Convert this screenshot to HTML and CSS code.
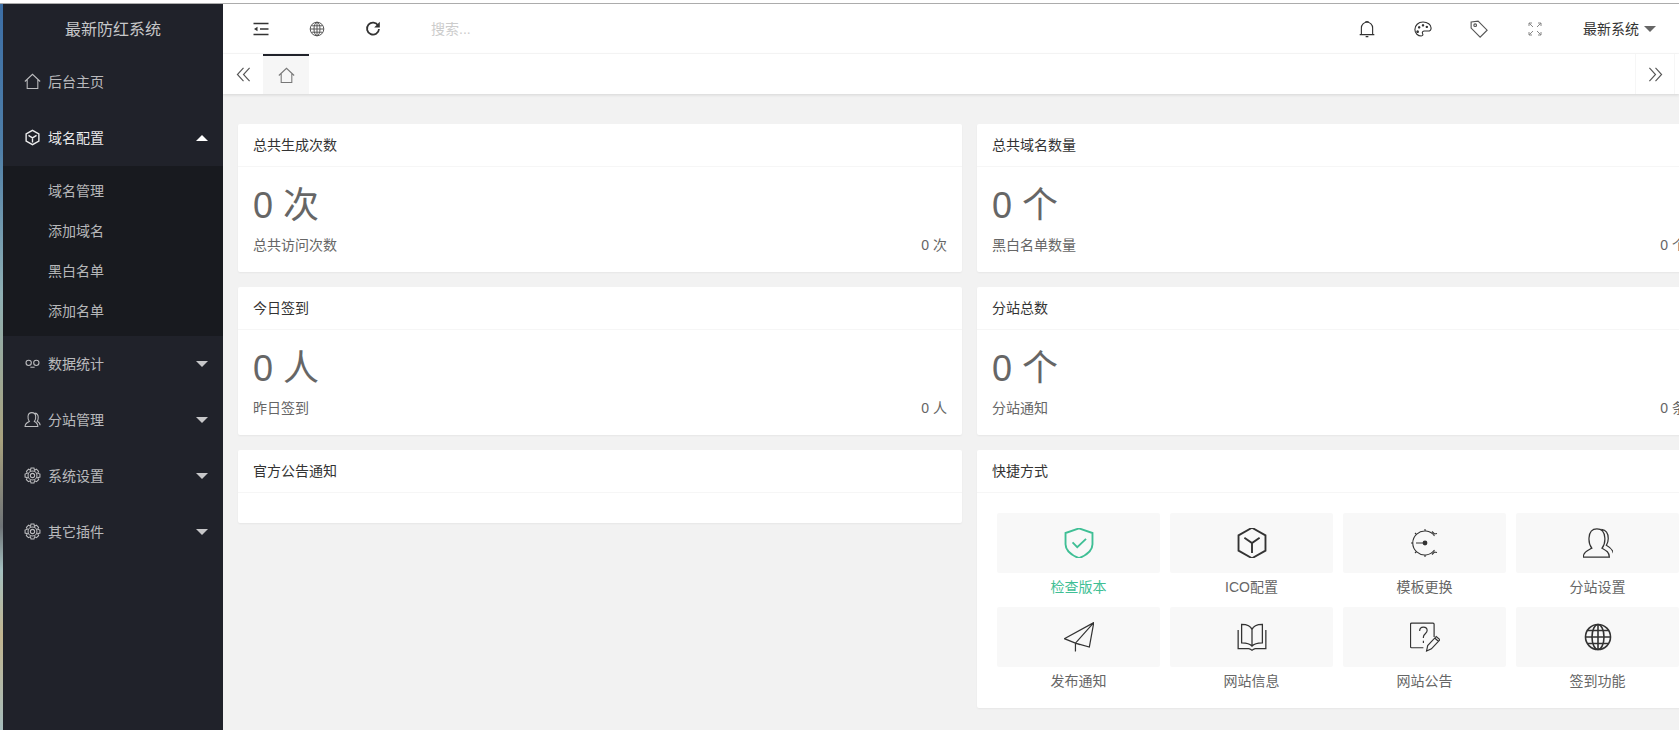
FILE: index.html
```html
<!DOCTYPE html>
<html lang="zh-CN">
<head>
    <meta charset="UTF-8">
    <meta name="viewport" content="width=device-width, initial-scale=1.0">
    <title>最新防红系统</title>
    <link rel="stylesheet" href="styles.css">
</head>
<body>
    <div class="window-edge"></div>
    <div class="app">
        <div class="desktop-strip"></div>
        <aside class="sidebar">
            <div class="logo">最新防红系统</div>
            <ul class="menu">
                <li class="menu-item">
                    <svg class="menu-icon" viewBox="0 0 16 16"><path d="M.8 8 8 1.2 15.2 8M3 6.2V14.5H13V6.2"/></svg>
                    <span>后台主页</span>
                </li>
                <li class="menu-item open">
                    <svg class="menu-icon bold" viewBox="0 0 16 16"><path d="M8 1.2 14 4.6V11.4L8 14.8 2 11.4V4.6ZM4.2 6 8 8.4 11.8 6M8 8.4V12.6"/></svg>
                    <span>域名配置</span>
                    <i class="caret up"></i>
                </li>
                <li>
                    <ul class="submenu">
                        <li>域名管理</li>
                        <li>添加域名</li>
                        <li>黑白名单</li>
                        <li>添加名单</li>
                    </ul>
                </li>
                <li class="menu-item">
                    <svg class="menu-icon" viewBox="0 0 16 16"><circle cx="4.4" cy="7.4" r="2.5"/><circle cx="11.6" cy="7.4" r="2.5"/><path d="M6 11.5H10"/></svg>
                    <span>数据统计</span>
                    <i class="caret"></i>
                </li>
                <li class="menu-item">
                    <svg class="menu-icon" viewBox="0 0 16 16"><path d="M1 14.5C1 11.5 3 10.8 5 9.8 3.8 8.6 3.6 7 3.8 5 4 3 5.4 1.5 7.4 1.5S10.8 3 11 5C11.2 7 11 8.6 9.8 9.8 11.8 10.8 13 11.5 13 14.5ZM10.5 2C12.5 2.5 13.4 4 13.4 6S13 8.8 12.4 9.6C14 10.4 15.2 11.5 15.2 13.5"/></svg>
                    <span>分站管理</span>
                    <i class="caret"></i>
                </li>
                <li class="menu-item">
                    <svg class="menu-icon" viewBox="0 0 16 16"><circle cx="8" cy="8" r="2"/><circle cx="8" cy="8" r="4.2"/><path d="M6.6 1H9.4L9.9 3 11.7 2.1 13.7 4.1 12.9 5.9 15 6.6V9.4L12.9 10 13.8 11.8 11.8 13.8 10 12.9 9.4 15H6.6L6 12.9 4.2 13.8 2.2 11.8 3.1 10 1 9.4V6.6L3.1 5.9 2.3 4.1 4.3 2.1 6.1 3Z"/></svg>
                    <span>系统设置</span>
                    <i class="caret"></i>
                </li>
                <li class="menu-item">
                    <svg class="menu-icon" viewBox="0 0 16 16"><circle cx="8" cy="8" r="2"/><circle cx="8" cy="8" r="4.2"/><path d="M6.6 1H9.4L9.9 3 11.7 2.1 13.7 4.1 12.9 5.9 15 6.6V9.4L12.9 10 13.8 11.8 11.8 13.8 10 12.9 9.4 15H6.6L6 12.9 4.2 13.8 2.2 11.8 3.1 10 1 9.4V6.6L3.1 5.9 2.3 4.1 4.3 2.1 6.1 3Z"/></svg>
                    <span>其它插件</span>
                    <i class="caret"></i>
                </li>
            </ul>
        </aside>
        <div class="main">
            <header class="topbar">
                <div class="nav-group">
                    <a class="nav-btn">
                        <svg class="nav-icon strong" viewBox="0 0 16 16"><path d="M.5 2.5H15.5M7 8H15.5M.5 13.5H15.5"/><path class="solid" d="M1 8 4.5 5.8V10.2Z"/></svg>
                    </a>
                    <a class="nav-btn">
                        <svg class="nav-icon muted" viewBox="0 0 16 16"><circle cx="8" cy="8" r="6.8"/><ellipse cx="8" cy="8" rx="3" ry="6.8"/><path d="M8 1.2V14.8M1.2 8H14.8M2.5 4.8H13.5M2.5 11.2H13.5"/></svg>
                    </a>
                    <a class="nav-btn">
                        <svg class="nav-icon refresh" viewBox="0 0 16 16"><path d="M13.2 4.6A6 6 0 1 0 14 8"/><path class="solid" d="M14.8 .8V6.4H9.2Z"/></svg>
                    </a>
                    <input class="search" type="text" placeholder="搜索...">
                </div>
                <div class="nav-group">
                    <a class="nav-btn">
                        <svg class="nav-icon large" viewBox="0 0 16 16"><path d="M1.5 13H14.5M3 13V7A5 5 0 0 1 13 7V13M6.5 2.2C6.8 1.2 9.2 1.2 9.5 2.2M6.8 14.8H9.2"/></svg>
                    </a>
                    <a class="nav-btn">
                        <svg class="nav-icon large" viewBox="0 0 16 16"><path d="M8 1.8C3.8 1.8 .8 4.8 .8 8.4 .8 12 3.6 14.2 6.4 14.2 8 14.2 8.2 13 7.6 12 7 10.8 7.8 9.8 9.2 9.8H12.4C14.2 9.8 15.2 8.6 15.2 7 15.2 4 12 1.8 8 1.8Z"/><path class="solid" d="M3.2 9.2a1.2 1.2 0 1 0 .01 0ZM4.6 5.4a1.1 1.1 0 1 0 .01 0ZM8 3.6a1.1 1.1 0 1 0 .01 0ZM11.4 5a1.1 1.1 0 1 0 .01 0Z"/></svg>
                    </a>
                    <a class="nav-btn">
                        <svg class="nav-icon large muted" viewBox="0 0 16 16"><path d="M1 1.8 7.2 1 15.2 9 9 15.2 1 7.2Z"/><circle cx="4.6" cy="4.6" r="1.2"/></svg>
                    </a>
                    <a class="nav-btn">
                        <svg class="nav-icon faint" viewBox="0 0 16 16"><path d="M2 2 6 6M2 5V2H5M14 2 10 6M11 2H14V5M2 14 6 10M2 11V14H5M14 14 10 10M14 11V14H11"/></svg>
                    </a>
                    <a class="user-btn">最新系统<i class="caret dark"></i></a>
                </div>
            </header>
            <div class="tabs">
                <a class="tab-arrow">
                    <svg class="arrow-icon" viewBox="0 0 16 16"><path d="M8 1 1.5 8 8 15M14.5 1 8 8 14.5 15"/></svg>
                </a>
                <a class="tab-home">
                    <svg class="home-icon" viewBox="0 0 16 16"><path d="M.8 8 8 1.2 15.2 8M3 6.2V14.5H13V6.2"/></svg>
                </a>
                <a class="tab-arrow right">
                    <svg class="arrow-icon" viewBox="0 0 16 16"><path d="M1.5 1 8 8 1.5 15M8 1 14.5 8 8 15"/></svg>
                </a>
            </div>
            <div class="content">
                <div class="card">
                    <div class="card-header">总共生成次数</div>
                    <div class="card-body">
                        <p class="big-number">0 次</p>
                        <p class="stat-line"><span>总共访问次数</span><span>0 次</span></p>
                    </div>
                </div>
                <div class="card">
                    <div class="card-header">总共域名数量</div>
                    <div class="card-body">
                        <p class="big-number">0 个</p>
                        <p class="stat-line"><span>黑白名单数量</span><span>0 个</span></p>
                    </div>
                </div>
                <div class="card">
                    <div class="card-header">今日签到</div>
                    <div class="card-body">
                        <p class="big-number">0 人</p>
                        <p class="stat-line"><span>昨日签到</span><span>0 人</span></p>
                    </div>
                </div>
                <div class="card">
                    <div class="card-header">分站总数</div>
                    <div class="card-body">
                        <p class="big-number">0 个</p>
                        <p class="stat-line"><span>分站通知</span><span>0 条</span></p>
                    </div>
                </div>
                <div class="card notice">
                    <div class="card-header">官方公告通知</div>
                    <div class="notice-body"></div>
                </div>
                <div class="card">
                    <div class="card-header">快捷方式</div>
                    <div class="shortcuts">
                        <a class="shortcut active">
                            <span class="tile">
                                <svg class="tile-icon" viewBox="2.2 2.2 25.6 25.6"><path d="M15 2.5 26.5 6.5V16C26.5 21.5 21 25.5 15 28 9 25.5 3.5 21.5 3.5 16V6.5Z"/><path d="M9.5 14.5 13.5 18.5 21 11.5"/></svg>
                            </span>
                            检查版本
                        </a>
                        <a class="shortcut">
                            <span class="tile">
                                <svg class="tile-icon" viewBox="2.2 2.2 25.6 25.6"><path d="M15 2 26.5 8.5V21.5L15 28 3.5 21.5V8.5ZM8.5 10.5 15 15 21.5 10.5M15 15V23.5"/></svg>
                            </span>
                            ICO配置
                        </a>
                        <a class="shortcut">
                            <span class="tile">
                                <svg class="tile-icon thin" viewBox="0 0 30 30"><path d="M24.5 8A12 12 0 1 0 24.5 22M15 1V3M15 27V29M1 15H3M5 5 6.3 6.3M5 25 6.3 23.7M22 3.5 24.5 6 27 5.5M22 26.5 24.5 24 27 24.5M6 15H15"/><circle class="solid" cx="15" cy="15" r="2.4"/></svg>
                            </span>
                            模板更换
                        </a>
                        <a class="shortcut">
                            <span class="tile">
                                <svg class="tile-icon thin" viewBox="1.7 1.7 26.5 26.5"><path d="M2 27.5C2 23 6 21.5 9.5 19.5 7.5 17 6.8 14 7 10.5 7.3 5.5 10 2.5 14 2.5S20.7 5.5 21 10.5C21.2 14 20.5 17 18.5 19.5 22 21.5 25 23 25 27.5ZM18 3C21.5 3.5 24 6.5 24 11 24 14 23.3 15.5 22.3 17 25 18.5 28 20.5 28.5 24"/></svg>
                            </span>
                            分站设置
                        </a>
                        <a class="shortcut">
                            <span class="tile">
                                <svg class="tile-icon thin" viewBox="1.7 1.5 27 27"><path d="M28.5 2 2 16.5 12 20.5 24.5 24ZM28.5 2 12 20.5 12 28M12 20.5 16 22"/></svg>
                            </span>
                            发布通知
                        </a>
                        <a class="shortcut">
                            <span class="tile">
                                <svg class="tile-icon thin" viewBox="2 2 26 26"><path d="M15 8.5C14 5.5 10 4 6 4V20C10 20 13.5 21 15 23 16.5 21 20 20 24 20V4C20 4 16 5.5 15 8.5V23M3 9V25H12C13 25 14 26 15 26.5 16 26 17 25 18 25H27V9"/></svg>
                            </span>
                            网站信息
                        </a>
                        <a class="shortcut">
                            <span class="tile">
                                <svg class="tile-icon thin" viewBox="1.5 1 28 28"><path d="M24 15V3C24 2.5 23.5 2 23 2H3C2.5 2 2 2.5 2 3V24C2 24.5 2.5 25 3 25H14M10.5 9.5C10.5 7 12 5.8 14 5.8S17.5 7 17.5 9C17.5 12 14 12 14 15V16M14 18.5V20.5M17 28 18 23 26 14.5 29.5 17.5 21.5 26ZM24.5 16 28 19"/></svg>
                            </span>
                            网站公告
                        </a>
                        <a class="shortcut">
                            <span class="tile">
                                <svg class="tile-icon" viewBox="0 0 30 30"><circle cx="15" cy="15" r="12.5"/><ellipse cx="15" cy="15" rx="6" ry="12.5"/><path d="M15 2.5V27.5M2.5 15H27.5M4.5 8.5H25.5M4.5 21.5H25.5"/></svg>
                            </span>
                            签到功能
                        </a>
                    </div>
                </div>
            </div>
        </div>
    </div>
</body>
</html>
```

FILE: styles.css
```css
* {
    box-sizing: border-box;
}
html, body {
    height: 100%;
    margin: 0;
    overflow: hidden;
}
body {
    font-family: "Liberation Sans", "Noto Sans CJK SC", sans-serif;
    font-size: 14px;
    color: #666;
    background: #f2f2f2;
}
ul, p {
    margin: 0;
    padding: 0;
    list-style: none;
}
svg {
    display: block;
    fill: none;
    stroke: currentColor;
    stroke-width: 1;
}
svg .solid {
    fill: currentColor;
    stroke: none;
}
.window-edge {
    height: 4px;
    background: #fff;
    border-bottom: 1px solid #acacac;
}
.app {
    display: flex;
    height: calc(100% - 4px);
}
.desktop-strip {
    flex: 0 0 3px;
    background: linear-gradient(180deg, #3c6ea5 0, #4f7fa8 20%, #8fb0b4 40%, #a9a27e 60%, #6f7478 72%, #a4c0c0 78%, #c2b58f 87%, #a5bcbc 100%);
}

/* sidebar */
.sidebar {
    flex: 0 0 220px;
    background: #20222a;
    color: rgba(255, 255, 255, 0.7);
}
.logo {
    height: 50px;
    line-height: 52px;
    text-align: center;
    font-size: 16px;
    color: rgba(255, 255, 255, 0.75);
}
.menu-item {
    position: relative;
    display: flex;
    align-items: center;
    height: 56px;
    padding-left: 21px;
    padding-bottom: 2px;
}
.menu-item.open {
    color: rgba(255, 255, 255, 0.92);
}
.menu-icon {
    width: 17px;
    height: 17px;
    margin-right: 7px;
}
.menu-icon.bold {
    stroke-width: 1.3;
}
.caret {
    position: absolute;
    right: 15px;
    top: 25px;
    border: 6px solid transparent;
    border-top-color: rgba(255, 255, 255, 0.75);
    border-bottom-width: 0;
}
.caret.up {
    border-top-width: 0;
    border-bottom: 6px solid #fff;
    border-top-color: transparent;
}
.caret.dark {
    position: static;
    display: inline-block;
    margin-left: 5px;
    vertical-align: 2px;
    border-top-color: #666;
}
.submenu {
    padding: 5px 0;
    background: #181a1f;
}
.submenu li {
    height: 40px;
    line-height: 40px;
    padding-left: 45px;
}

/* top bar */
.main {
    flex: 1;
    min-width: 0;
    overflow: hidden;
}
.topbar {
    display: flex;
    justify-content: space-between;
    height: 50px;
    padding-left: 10px;
    background: #fff;
    border-bottom: 1px solid #f8f8f8;
}
.nav-group {
    display: flex;
    align-items: center;
}
.nav-btn {
    display: flex;
    justify-content: center;
    width: 56px;
    color: #333;
}
.nav-icon {
    width: 16px;
    height: 16px;
}
.nav-icon.large {
    width: 18px;
    height: 18px;
}
.nav-icon.strong {
    stroke-width: 1.6;
}
.nav-icon.refresh {
    stroke-width: 1.8;
}
.nav-icon.muted {
    color: #555;
}
.nav-icon.faint {
    color: #888;
}
.search {
    width: 200px;
    margin-left: 30px;
    padding: 0;
    border: 0;
    outline: 0;
    font: inherit;
    background: transparent;
}
.search::placeholder {
    color: #ccc;
}
.user-btn {
    width: 116px;
    padding: 0 0 2px 20px;
    color: #333;
    white-space: nowrap;
}

/* tabs */
.tabs {
    display: flex;
    height: 40px;
    padding-right: 4px;
    background: #fff;
    box-shadow: 0 1px 3px rgba(0, 0, 0, 0.12);
}
.tab-arrow {
    display: flex;
    align-items: center;
    justify-content: center;
    width: 40px;
    color: #555;
}
.tab-arrow.right {
    margin-left: auto;
    border-left: 1px solid #f6f6f6;
    border-right: 1px solid #f6f6f6;
}
.arrow-icon {
    width: 15px;
    height: 15px;
    stroke-width: 1.2;
}
.tab-home {
    display: flex;
    align-items: center;
    justify-content: center;
    width: 46px;
    background: #f6f6f6;
    border-top: 2px solid #20222a;
    color: #777;
}
.home-icon {
    width: 17px;
    height: 17px;
}

/* cards */
.content {
    display: grid;
    grid-template-columns: 724px 724px;
    gap: 15px;
    align-items: start;
    padding: 30px 15px;
}
.card {
    background: #fff;
    border-radius: 2px;
    box-shadow: 0 1px 2px rgba(0, 0, 0, 0.05);
}
.card-header {
    height: 43px;
    line-height: 42px;
    padding: 0 15px;
    border-bottom: 1px solid #f6f6f6;
    color: #333;
}
.card-body {
    padding: 16px 15px 17px;
}
.big-number {
    padding: 5px 0 11px;
    font-size: 36px;
    line-height: 36px;
}
.stat-line {
    display: flex;
    justify-content: space-between;
    line-height: 20px;
}
.notice-body {
    height: 30px;
}

/* shortcuts */
.shortcuts {
    display: grid;
    grid-template-columns: repeat(4, 1fr);
    column-gap: 10px;
    padding: 20px 22px 7px 20px;
}
.shortcut {
    display: block;
    height: 94px;
    line-height: 28px;
    text-align: center;
}
.shortcut.active {
    color: #3fbf95;
}
.tile {
    display: flex;
    align-items: center;
    justify-content: center;
    height: 60px;
    background: #f8f8f8;
    border-radius: 2px;
    color: #333;
}
.shortcut.active .tile {
    color: #3fbf95;
}
.tile-icon {
    width: 30px;
    height: 30px;
    stroke-width: 1.6;
}
.tile-icon.thin {
    stroke-width: 1.1;
}
```
